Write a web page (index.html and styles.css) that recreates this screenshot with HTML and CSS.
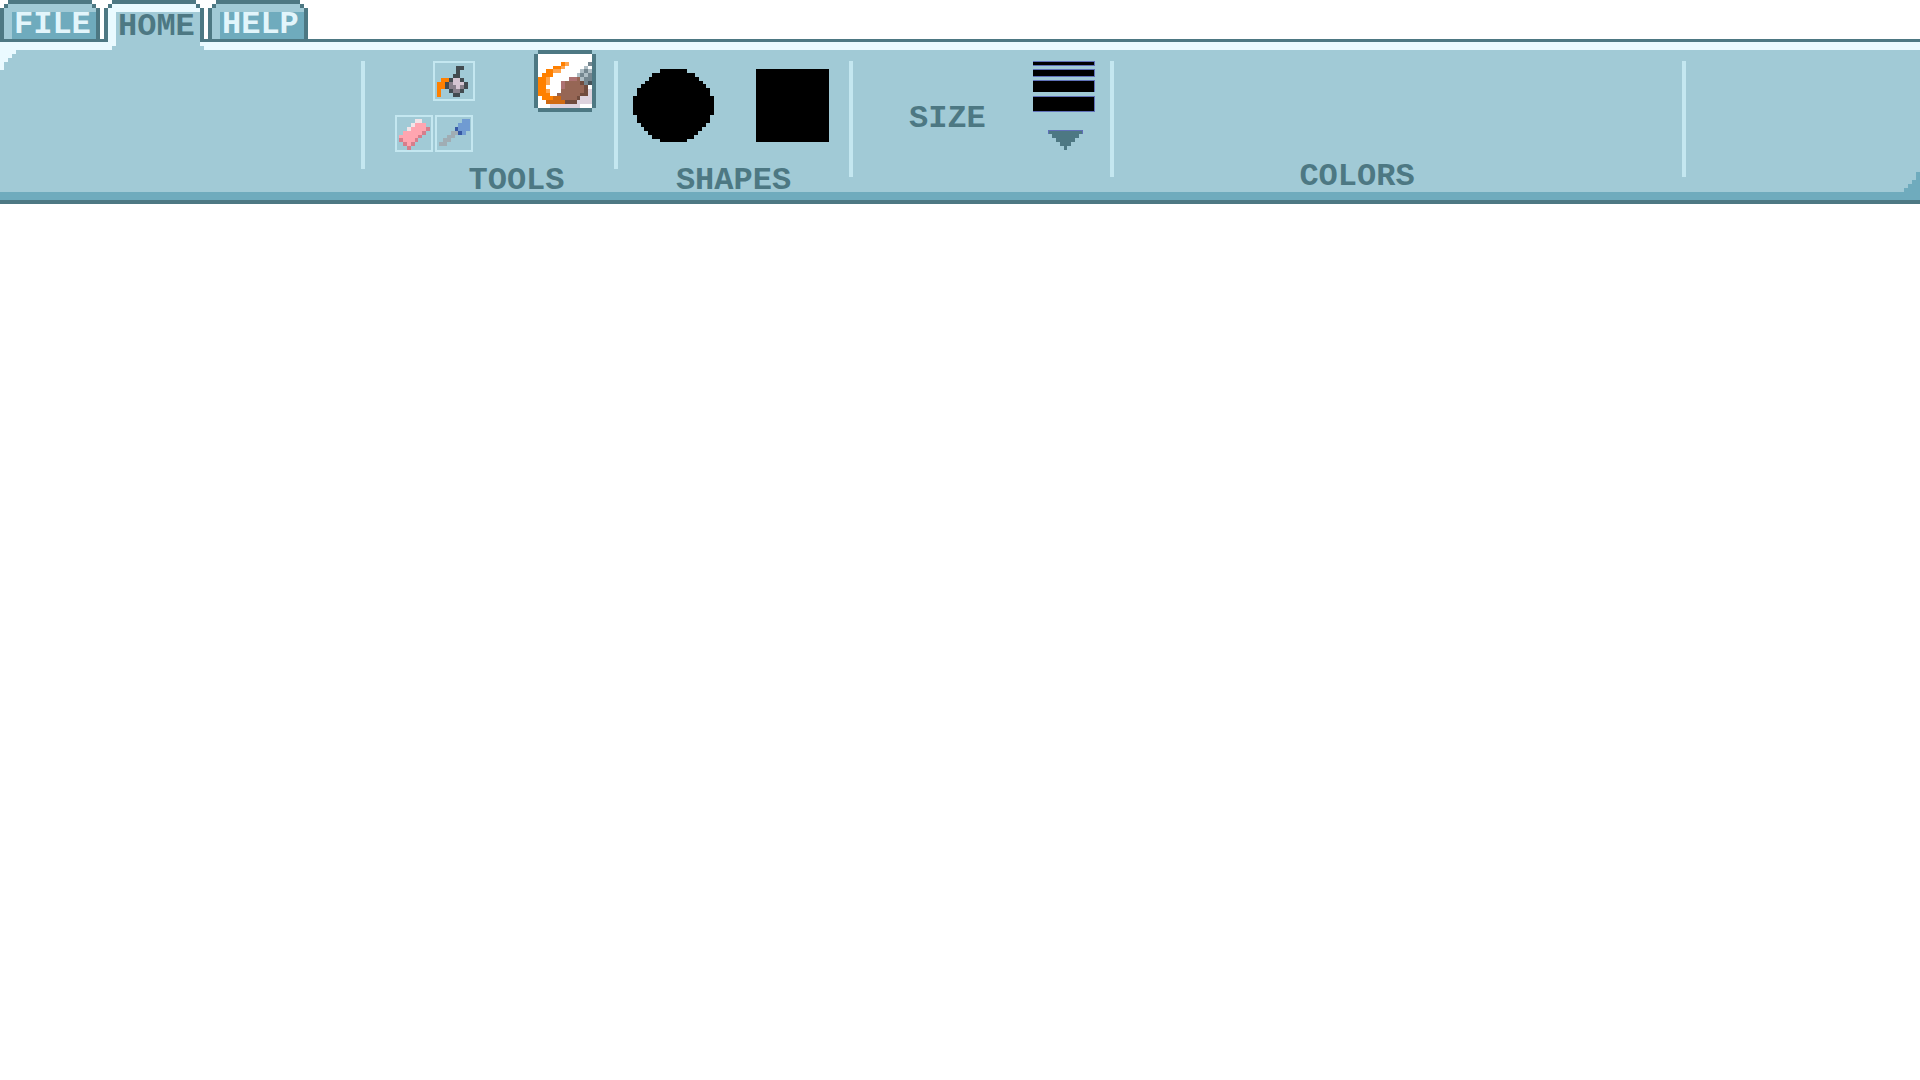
FILE: index.html
```
<!DOCTYPE html>
<html lang="en">
<head>
<meta charset="utf-8">
<meta name="viewport" content="width=device-width, initial-scale=1">
<title>Paint</title>
<link rel="stylesheet" href="styles.css">
</head>
<body>
<header>
  <nav class="tabs" aria-label="Menu">
    <button class="tab" type="button">FILE</button>
    <button class="tab tab-active" type="button" aria-current="page">HOME</button>
    <button class="tab" type="button">HELP</button>
  </nav>
  <div class="ribbon">
    <svg class="corner corner-left" width="16" height="20" viewBox="0 0 16 20" aria-hidden="true"><path d="M0 0H16V4H12V8H8V12H4V20H0Z"/></svg>
    <div class="section section-blank"></div>
    <div class="divider"></div>
    <section class="section section-tools">
      <div class="tools">
        <div class="small-tools">
          <button class="tool tool-fill" type="button" aria-label="Fill">
            <svg class="icon" viewBox="0 0 8 8" aria-hidden="true">
              <path stroke="#424b50" d="M5 .5h2M5 1.5h1M4 2.5h2M3 3.5h1M6 3.5h1M2 4.5h1M7 4.5h1M2 5.5h1M7 5.5h1M3 6.5h1M6 6.5h1M4 7.5h2"/>
              <path stroke="#ff8000" d="M1 3.5h2M0 4.5h2M0 5.5h2M0 6.5h1M0 7.5h1"/>
              <path stroke="#877f8a" d="M3 4.5h1M3 5.5h2M6 5.5h1M4 6.5h2"/>
              <path stroke="#d5c5d2" d="M4 3.5h2M4 4.5h3M5 5.5h1"/>
            </svg>
          </button>
          <button class="tool" type="button" aria-label="Eraser">
            <svg class="icon" viewBox="0 0 8 8" aria-hidden="true">
              <path stroke="#ffa5b0" d="M4 1.5h3M3 2.5h4M1 3.5h5M0 4.5h5M1 5.5h3M2 6.5h1"/>
              <path stroke="#f3e4e8" d="M4 .5h2M3 1.5h1M2 2.5h1"/>
              <path stroke="#d67e8c" d="M7 2.5h1M6 3.5h1M5 4.5h1M0 5.5h1M4 5.5h1M1 6.5h1M3 6.5h1M2 7.5h1"/>
            </svg>
          </button>
          <button class="tool" type="button" aria-label="Color picker">
            <svg class="icon" viewBox="0 0 8 8" aria-hidden="true">
              <path stroke="#709bd2" d="M6 .5h2M5 1.5h3M5 2.5h3M6 3.5h1"/>
              <path stroke="#3659a5" d="M4 2.5h1M5 3.5h1"/>
              <path stroke="#a0adb4" d="M3 3.5h2M2 4.5h2M1 5.5h2M0 6.5h2"/>
            </svg>
          </button>
        </div>
        <button class="brush" type="button" aria-label="Brush">
          <svg class="brush-icon" viewBox="0 0 14 14" aria-hidden="true">
            <path stroke="#ff8000" d="M6 2.5h1M4 3.5h2M2 4.5h2M1 5.5h3M0 6.5h2M0 7.5h2M0 8.5h2M0 9.5h2M0 10.5h3M1 11.5h3"/>
            <path stroke="#ffa64f" d="M7 2.5h1M6 3.5h1M4 4.5h2M2 6.5h1M2 7.5h1M2 9.5h1"/>
            <path stroke="#d06a12" d="M4 11.5h2M2 12.5h5"/>
            <path stroke="#966655" d="M8 6.5h3M6 7.5h6M6 8.5h6M6 9.5h6M5 10.5h6M6 11.5h4"/>
            <path stroke="#ad7272" d="M8 6.5h2M6 7.5h1M6 8.5h1"/>
            <path stroke="#714c3e" d="M11 7.5h1M12 8.5h1M12 9.5h1M11 10.5h2M10 11.5h1M7 12.5h3"/>
            <path stroke="#ddd3de" d="M13 9.5h1M13 10.5h1M11 11.5h3M10 12.5h4M3 13.5h8"/>
            <path stroke="#aebdc4" d="M12 3.5h1M11 4.5h1M13 4.5h1M10 5.5h3M11 6.5h1"/>
            <path stroke="#758790" d="M13 2.5h1M12 4.5h1M11 5.5h1M13 5.5h1M12 6.5h2M12 7.5h1"/>
            <path stroke="#46545b" d="M13 7.5h1"/>
          </svg>
        </button>
      </div>
      <h2 class="label">TOOLS</h2>
    </section>
    <div class="divider"></div>
    <section class="section section-shapes">
      <div class="shapes">
        <button class="shape" type="button" aria-label="Circle">
          <svg width="81" height="73" viewBox="0 0 81 73" aria-hidden="true"><path d="M27 0H54V4H62V8H66V12H70V15H73V19H77V27H81V46H77V54H73V58H69V62H65V66H61V70H54V73H27V70H19V66H15V62H11V58H8V54H4V46H0V27H4V19H8V15H12V12H16V8H19V4H27Z"/></svg>
        </button>
        <button class="shape" type="button" aria-label="Square">
          <svg width="73" height="73" viewBox="0 0 73 73" aria-hidden="true"><path d="M0 0H73V73H0Z"/></svg>
        </button>
      </div>
      <h2 class="label">SHAPES</h2>
    </section>
    <div class="divider divider-long"></div>
    <section class="section section-size">
      <h2 class="label">SIZE</h2>
      <button class="size" type="button" aria-label="Choose size">
        <svg width="62" height="90" viewBox="0 0 62 90" aria-hidden="true">
          <path fill="#5f70b8" d="M0 0H62V5H0ZM0 8H62V16H0ZM0 19H62V31H0ZM0 35H62V51H0ZM15 69H50V73H15Z"/>
          <path d="M0 1H61V4H0ZM0 9H61V15H0ZM0 20H61V31H0ZM0 36H61V50H0Z"/>
          <path fill="#4d7883" d="M16 70H49V73H46V77H42V81H38V85H34V89H31V85H27V81H23V77H19V73H16Z"/>
        </svg>
      </button>
    </section>
    <div class="divider divider-long"></div>
    <section class="section section-colors">
      <h2 class="label">COLORS</h2>
    </section>
    <div class="divider divider-long"></div>
    <div class="section section-end"></div>
    <svg class="corner corner-right" width="16" height="20" viewBox="0 0 16 20" aria-hidden="true"><path d="M16 0V20H0V16H4V12H8V8H12V0Z"/></svg>
  </div>
</header>
<main class="canvas"></main>
</body>
</html>
```
FILE: styles.css
```
:root {
  --body: #a1cad6;
  --mid: #6fabbd;
  --dark: #4d7883;
  --pale: #eafaff;
  --line: #c4e7f0;
}

* {
  box-sizing: border-box;
}

body {
  margin: 0;
  background: #fff;
  font: bold 32px/32px "Liberation Mono", monospace;
  color: var(--dark);
}

button {
  margin: 0;
  padding: 0;
  border: 0;
  background: none;
  font: inherit;
  color: inherit;
  cursor: pointer;
}

svg {
  display: block;
  shape-rendering: crispEdges;
}

.tabs {
  display: flex;
  gap: 4px;
  height: 50px;
  background: linear-gradient(#fff 39px, var(--dark) 39px 42px, var(--pale) 42px);
}

.tab {
  --edge: linear-gradient(var(--dark), var(--dark));
  --light: linear-gradient(var(--body), var(--body));
  width: 100px;
  height: 39px;
  padding: 10px 0 0 14px;
  line-height: 28px;
  text-align: left;
  color: #e2f5fb;
  background:
    var(--edge) 8px 0 / 84px 4px no-repeat,
    var(--edge) 4px 4px / 4px 4px no-repeat,
    var(--edge) 92px 4px / 4px 4px no-repeat,
    var(--edge) 0 8px / 4px 34px no-repeat,
    var(--edge) 96px 8px / 4px 34px no-repeat,
    linear-gradient(var(--mid), var(--mid)) 12px 12px / 84px 30px no-repeat,
    var(--light) 8px 4px / 84px 4px no-repeat,
    var(--light) 4px 8px / 92px 34px no-repeat;
}

.tab-active {
  --glow: linear-gradient(var(--pale), var(--pale));
  height: 50px;
  padding: 4px 0 0 14px;
  color: var(--dark);
  background:
    var(--edge) 8px 0 / 84px 4px no-repeat,
    var(--edge) 4px 4px / 4px 4px no-repeat,
    var(--edge) 92px 4px / 4px 4px no-repeat,
    var(--edge) 0 8px / 4px 34px no-repeat,
    var(--edge) 96px 8px / 4px 34px no-repeat,
    var(--light) 12px 12px / 84px 38px no-repeat,
    var(--light) 8px 46px / 92px 4px no-repeat,
    var(--glow) 8px 4px / 84px 8px no-repeat,
    var(--glow) 4px 8px / 92px 42px no-repeat;
}

.ribbon {
  position: relative;
  display: grid;
  grid-template-columns: 361fr 4px 249fr 4px 231fr 4px 257fr 4px 568fr 4px 234fr;
  min-height: 154px;
  background: var(--body);
  border-bottom: 4px solid var(--dark);
  box-shadow: inset 0 -8px var(--mid);
}

.corner {
  position: absolute;
}

.corner-left {
  top: 0;
  left: 0;
  fill: var(--pale);
}

.corner-right {
  right: 0;
  bottom: 8px;
  fill: var(--mid);
}

.divider {
  height: 108px;
  margin-top: 11px;
  background: var(--line);
}

.divider-long {
  height: 116px;
}

.section {
  display: flex;
  flex-direction: column;
}

.label {
  margin: 0;
  font: inherit;
}

.tools {
  display: flex;
  justify-content: space-between;
  align-items: flex-start;
  padding: 0 18px 0 30px;
}

.small-tools {
  display: grid;
  grid-template-columns: 38px 38px;
  column-gap: 2px;
  row-gap: 14px;
  padding-top: 11px;
}

.tool {
  width: 38px;
  height: 37px;
  padding: 2px;
  border: 2px solid var(--line);
}

.tool-fill {
  grid-column: 2;
  width: 42px;
  height: 40px;
  margin-left: -2px;
}

.icon {
  width: 31px;
  height: 31px;
  fill: none;
}

.brush {
  width: 62px;
  height: 62px;
  background:
    linear-gradient(#fff, #fff) 4px 4px / 54px 54px no-repeat,
    linear-gradient(var(--dark), var(--dark)) 0 4px / 62px 54px no-repeat,
    linear-gradient(var(--dark), var(--dark)) 4px 0 / 54px 62px no-repeat;
  padding: 4px;
}

.brush-icon {
  width: 54px;
  height: 54px;
  fill: none;
}

.section-tools .label {
  margin-top: 13px;
  text-align: center;
  padding-left: 54px;
}

.shapes {
  display: flex;
  justify-content: space-between;
  padding: 19px 20px 0 15px;
}

.section-shapes .label {
  margin-top: 23px;
  text-align: center;
}

.section-size {
  flex-direction: row;
  align-items: flex-start;
  justify-content: space-between;
  padding: 11px 15px 0 56px;
}

.section-size .label {
  margin-top: 42px;
}

.section-colors {
  justify-content: flex-end;
  padding-bottom: 7px;
}

.section-colors .label {
  text-align: center;
  padding-right: 82px;
}

.canvas {
  background: #fff;
}
```
